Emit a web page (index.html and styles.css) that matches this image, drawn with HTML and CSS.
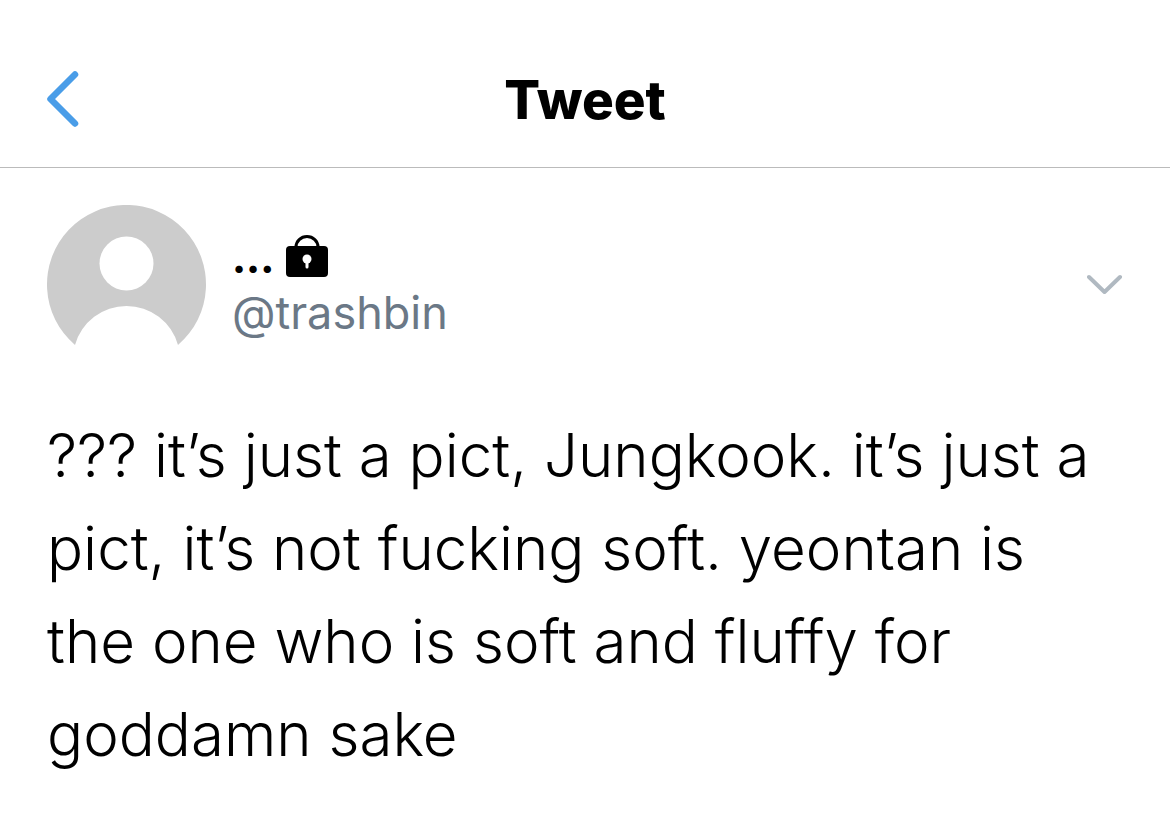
FILE: index.html
```
<!DOCTYPE html>
<html lang="en">
<head>
  <meta charset="UTF-8" />
  <meta name="viewport" content="width=device-width, initial-scale=1.0"/>
  <title>Tweet</title>
  <link rel="stylesheet" href="styles.css">
</head>
<body>
  <header class="topbar">
    <button class="icon-button" aria-label="Back">
      <svg width="34" height="58" viewBox="0 0 34 58"><path d="M29 3.500L4.500 28L29 52.500" fill="none" stroke="#4a9de8" stroke-width="6.500" stroke-linecap="round" stroke-linejoin="round"/></svg>
    </button>
    <h1 class="title">Tweet</h1>
  </header>
  <main class="tweet">
    <div class="author">
      <svg class="avatar" width="160" height="160" viewBox="0 0 160 160" role="img" aria-label="Avatar">
        <path d="M28 140A79.500 79.500 0 1 1 131 140A53.500 53.500 0 0 0 28 140Z" fill="#ccc"/>
        <circle cx="79.500" cy="58.500" r="27" fill="#fff"/>
      </svg>
      <div class="names">
        <div class="name">
          <span>...</span>
          <svg width="42" height="42" viewBox="0 0 42 42" role="img" aria-label="Protected account">
            <path d="M10 14V12a11 10.500 0 0 1 22 0v2" fill="none" stroke="#000" stroke-width="3"/>
            <rect y="11" width="42" height="31" rx="4"/>
            <circle cx="21" cy="24" r="4.500" fill="#fff"/>
            <path d="M21 26v6" stroke="#fff" stroke-width="3" stroke-linecap="round"/>
          </svg>
        </div>
        <div class="handle">@trashbin</div>
      </div>
      <button class="icon-button more" aria-label="More">
        <svg width="36" height="22" viewBox="0 0 36 22"><path d="M2 3L17.500 18L33 3" fill="none" stroke="#b0b9c1" stroke-width="4" stroke-linecap="round" stroke-linejoin="round"/></svg>
      </button>
    </div>
    <p class="text">??? it’s just a pict, Jungkook. it’s just a pict, it’s not fucking soft. yeontan is the one who is soft and fluffy for goddamn sake</p>
  </main>
</body>
</html>
```
FILE: styles.css
```
body {
  margin: 0;
  background: #fff;
  color: #000;
  font-family: Inter, sans-serif;
}
.topbar {
  display: grid;
  grid-template-columns: 1fr auto 1fr;
  align-items: center;
  padding: 32px 46px 0;
  height: 135px;
  border-bottom: 1px solid #bbb;
}
.icon-button {
  display: flex;
  padding: 0;
  border: none;
  background: none;
  cursor: pointer;
}
.title {
  margin: 0;
  font-size: 53px;
  line-height: 64px;
  font-weight: 800;
}
.tweet {
  padding: 37px 47px;
}
.author {
  display: flex;
  align-items: center;
}
.names {
  margin-left: 25px;
}
.name {
  display: flex;
  align-items: flex-end;
  gap: 12px;
  padding: 6px 0 8px;
  font-size: 40px;
  line-height: 36px;
  font-weight: 800;
}
.handle {
  color: #6b7886;
  font-size: 45px;
  line-height: 56px;
}
.more {
  margin-left: auto;
}
.text {
  margin: 44px 0 0;
  padding-right: 24px;
  font-size: 60px;
  line-height: 93px;
  font-weight: 300;
}
```
